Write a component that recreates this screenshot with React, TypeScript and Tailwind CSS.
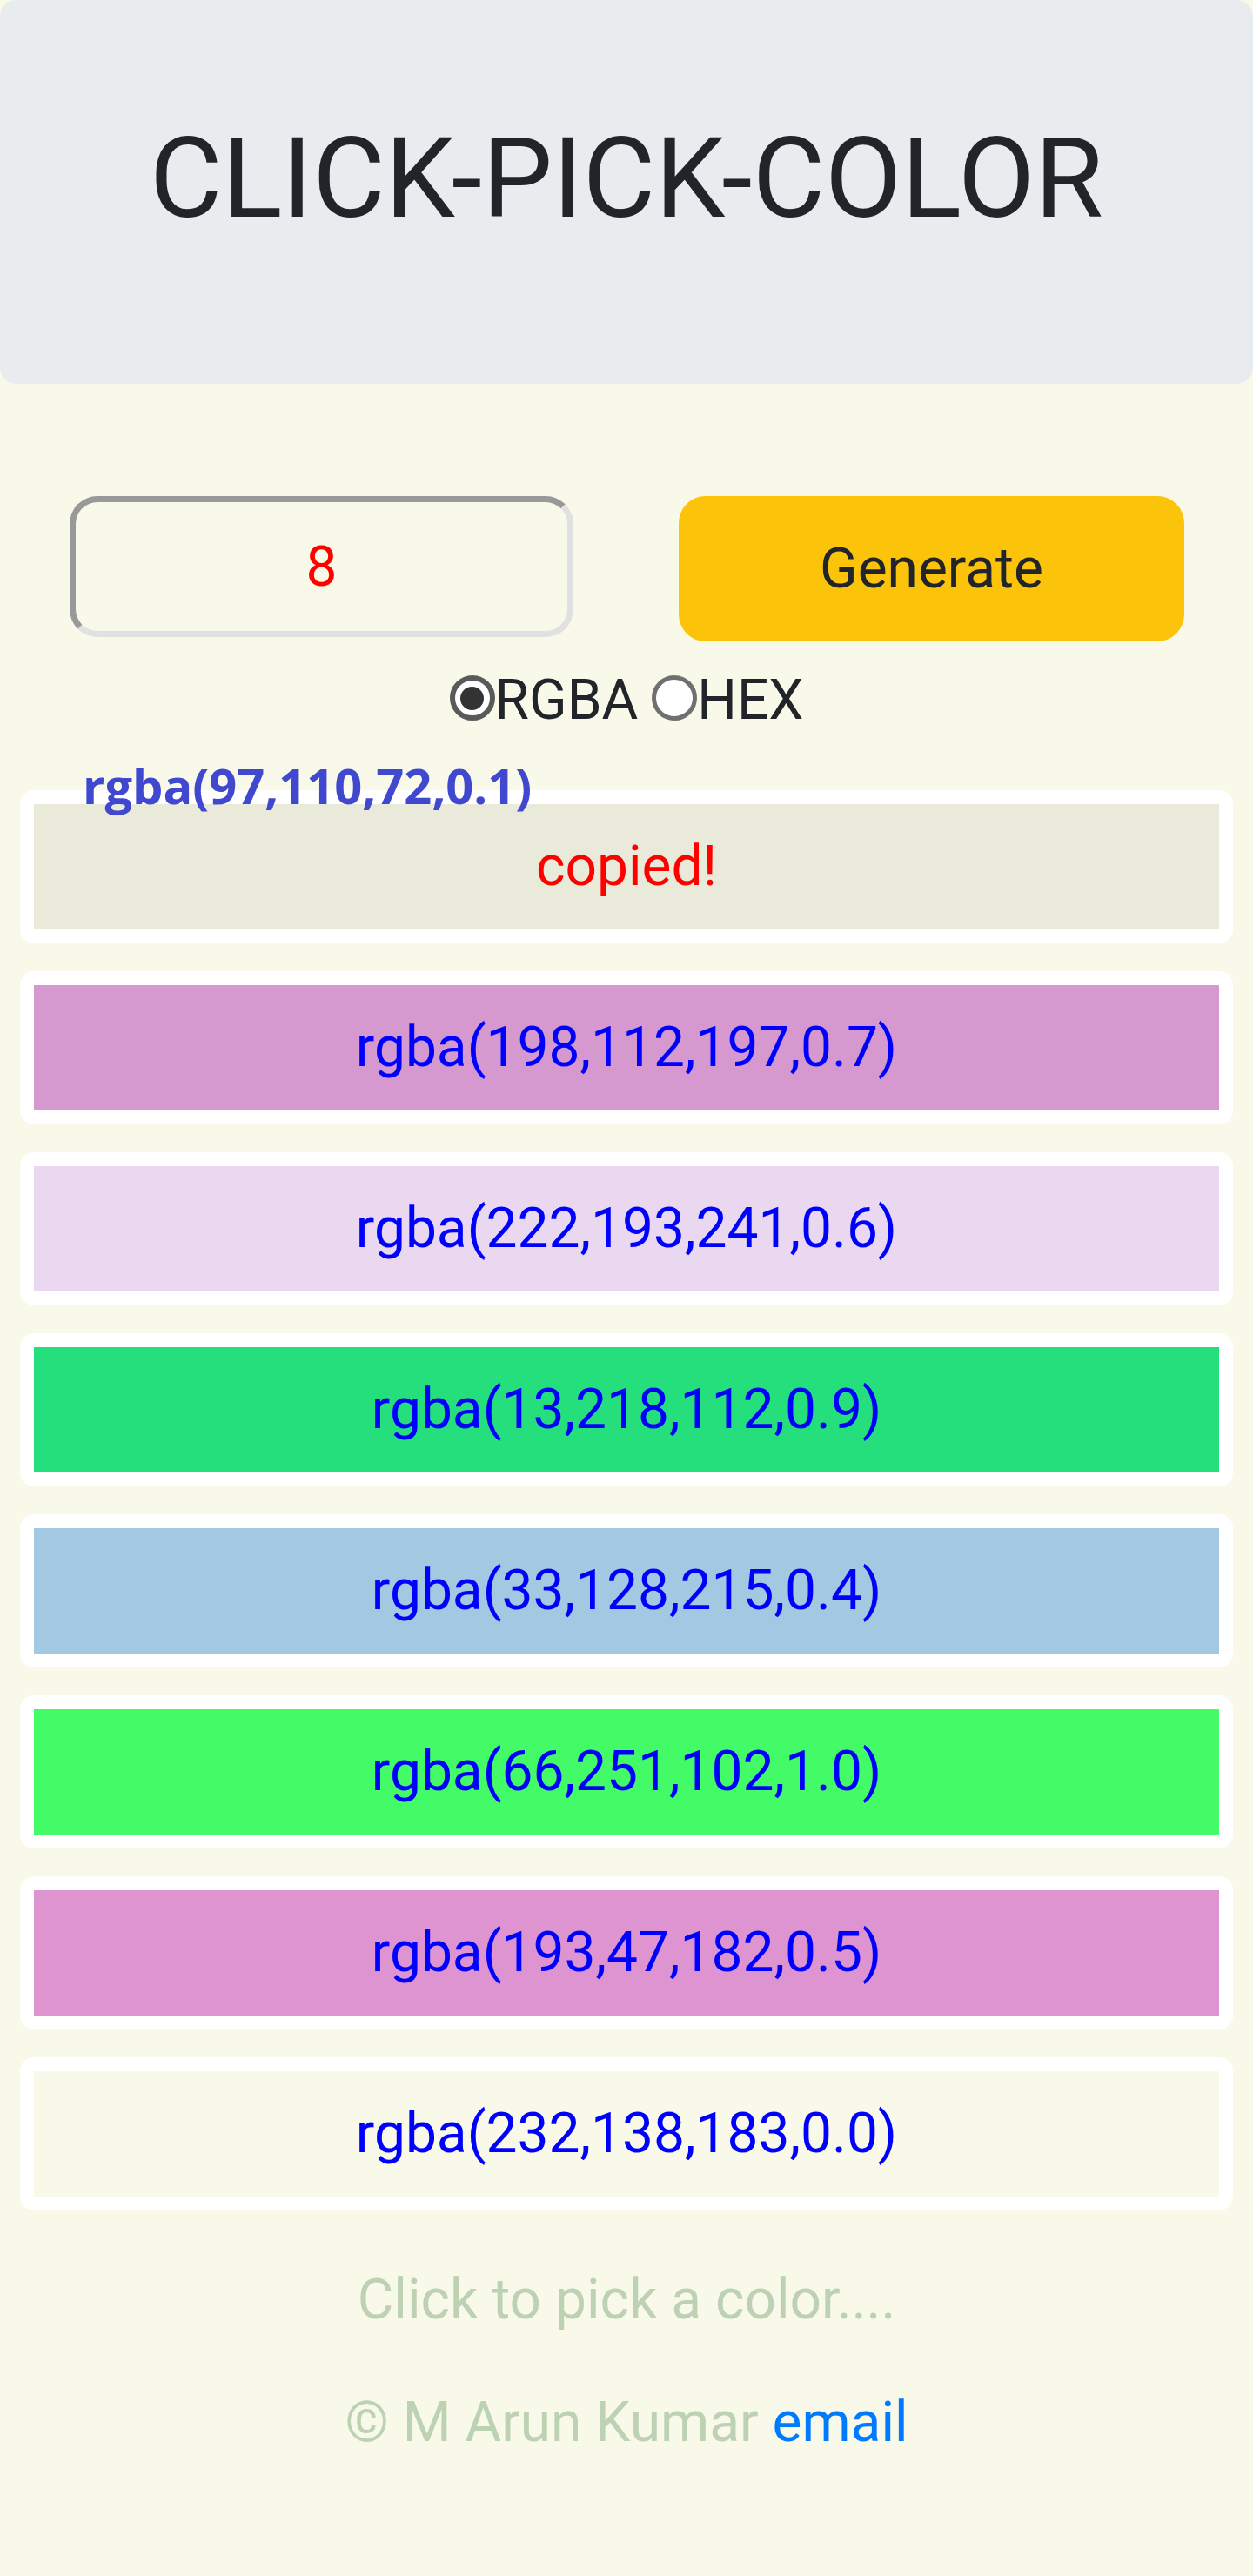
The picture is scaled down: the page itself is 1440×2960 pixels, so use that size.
import { useState } from 'react';

const colors = [
  { value: 'rgba(97,110,72,0.1)', copied: true },
  { value: 'rgba(198,112,197,0.7)' },
  { value: 'rgba(222,193,241,0.6)' },
  { value: 'rgba(13,218,112,0.9)' },
  { value: 'rgba(33,128,215,0.4)' },
  { value: 'rgba(66,251,102,1.0)' },
  { value: 'rgba(193,47,182,0.5)' },
  { value: 'rgba(232,138,183,0.0)' },
];

function Radio({ checked }: { checked: boolean }) {
  return checked ? (
    <span className="flex h-[52px] w-[52px] shrink-0 -translate-y-[3px] items-center justify-center rounded-full border-[6px] border-[#5a5a5a] bg-white">
      <span className="h-[27px] w-[27px] rounded-full bg-[#333333]" />
    </span>
  ) : (
    <span className="block h-[52px] w-[52px] shrink-0 -translate-y-[3px] rounded-full border-[5px] border-[#707070] bg-white" />
  );
}

export default function App() {
  const [count] = useState('8');

  return (
    <div className="min-h-[2960px] bg-[#f9f9ea] font-['Roboto',sans-serif]">
      {/* Jumbotron */}
      <header className="h-[441px] rounded-[19px] bg-[#e9ecef] pt-[128px]">
        <h1 className="text-center text-[128px] font-normal leading-[154px] text-[#212529]">
          CLICK-PICK-COLOR
        </h1>
      </header>

      {/* Count + generate */}
      <div className="mt-[129px] flex items-start justify-between pl-[80px] pr-[79px]">
        <input
          value={count}
          readOnly
          className="h-[162px] w-[579px] rounded-[32px] border-[7px] border-t-[#999999] border-l-[#999999] border-r-[#e1e1e1] border-b-[#e1e1e1] bg-transparent text-center text-[64px] text-[#ff0000] outline-none"
        />
        <button className="h-[167px] w-[581px] rounded-[31px] bg-[#fcc30b] text-[64px] text-[#212529]">
          Generate
        </button>
      </div>

      {/* Format */}
      <div className="mt-[20px] flex h-[96px] items-center justify-center text-[64px] leading-[96px] text-[#212529]">
        <Radio checked />
        <span>RGBA</span>
        <span className="w-[16px]" />
        <Radio checked={false} />
        <span>HEX</span>
      </div>

      {/* Colour list */}
      <div className="relative mt-[55px] flex flex-col gap-[32px] px-[23px]">
        <span className="absolute left-[95px] top-[-34px] z-10 font-['Open_Sans',sans-serif] text-[56px] font-bold leading-none text-[#4148d0]">
          rgba(97,110,72,0.1)
        </span>
        {colors.map((c) => (
          <div key={c.value} className="h-[176px] rounded-[16px] bg-white p-[16px]">
            <div className="h-full bg-[#f9f9ea]">
              <div className="flex h-full w-full items-center justify-center" style={{ backgroundColor: c.value }}>
                {c.copied ? (
                  <span className="text-[64px] leading-[96px] text-[#ff0000]">copied!</span>
                ) : (
                  <span className="text-[64px] leading-[96px] text-[#0000ff]">{c.value}</span>
                )}
              </div>
            </div>
          </div>
        ))}
      </div>

      {/* Footer */}
      <p className="mt-[55px] text-center text-[64px] leading-[96px] text-[#bdd1b3]">Click to pick a color....</p>
      <p className="mt-[45px] text-center text-[64px] leading-[96px] text-[#bdd1b3]">
        © M Arun Kumar <a className="text-[#007bff]">email</a>
      </p>
    </div>
  );
}
